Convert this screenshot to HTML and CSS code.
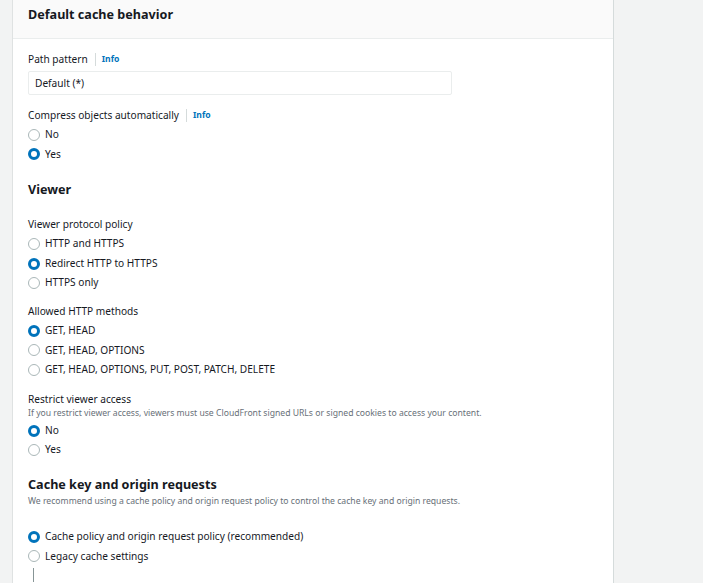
FILE: index.html
```html
<!DOCTYPE html>
<html>
<head>
<meta charset="utf-8">
<link rel="stylesheet" href="styles.css">
</head>
<body>
<div class="page">
  <div class="gutter"></div>
  <div class="panel">
    <div class="panel-header"><h2>Default cache behavior</h2></div>
    <div class="panel-body">
      <div class="field">
        <div class="label">Path pattern <span class="sep"></span><a class="info">Info</a></div>
        <div class="input">Default (*)</div>
      </div>
      <div class="field compress">
        <div class="label">Compress objects automatically <span class="sep"></span><a class="info">Info</a></div>
        <div class="radios">
          <div class="radio"><span class="dot"></span>No</div>
          <div class="radio"><span class="dot on"></span>Yes</div>
        </div>
      </div>

      <h3 class="section viewer">Viewer</h3>
      <div class="field">
        <div class="label">Viewer protocol policy</div>
        <div class="radios">
          <div class="radio"><span class="dot"></span>HTTP and HTTPS</div>
          <div class="radio"><span class="dot on"></span>Redirect HTTP to HTTPS</div>
          <div class="radio"><span class="dot"></span>HTTPS only</div>
        </div>
      </div>
      <div class="field methods">
        <div class="label">Allowed HTTP methods</div>
        <div class="radios">
          <div class="radio"><span class="dot on"></span>GET, HEAD</div>
          <div class="radio"><span class="dot"></span>GET, HEAD, OPTIONS</div>
          <div class="radio"><span class="dot"></span>GET, HEAD, OPTIONS, PUT, POST, PATCH, DELETE</div>
        </div>
      </div>
      <div class="field restrict">
        <div class="label">Restrict viewer access</div>
        <div class="desc tight">If you restrict viewer access, viewers must use CloudFront signed URLs or signed cookies to access your content.</div>
        <div class="radios">
          <div class="radio"><span class="dot on"></span>No</div>
          <div class="radio"><span class="dot"></span>Yes</div>
        </div>
      </div>

      <h3 class="section cachekey">Cache key and origin requests</h3>
      <div class="desc">We recommend using a cache policy and origin request policy to control the cache key and origin requests.</div>
      <div class="radios spaced">
        <div class="radio"><span class="dot on"></span>Cache policy and origin request policy (recommended)</div>
        <div class="radio"><span class="dot"></span>Legacy cache settings</div>
      </div>
      <div class="vline"></div>
    </div>
  </div>
  <div class="aside"></div>
</div>
</body>
</html>
```

FILE: styles.css
```css
* { box-sizing: border-box; }
html, body { margin: 0; padding: 0; height: 100%; }
body {
  font-family: "Noto Sans", "Open Sans", sans-serif;
  font-size: 10.15px;
  color: #16191f;
  background: #f2f3f3;
  overflow: hidden;
}
.page { display: flex; height: 583px; }
.gutter { width: 13px; flex: none; border-right: 1px solid #dfe2e2; background: #f2f3f3; }
.panel { width: 601px; flex: none; background: #fff; border-right: 1px solid #d5dbdb; }
.aside { flex: 1; background: #f2f3f3; }
.panel-header {
  height: 39px;
  background: #fafafa;
  border-bottom: 1px solid #eaeded;
  padding: 5px 15px 0;
}
.panel-header h2 { margin: 0; font-size: 12.6px; font-weight: 700; line-height: 20px; }
.panel-body { padding: 11px 15px 0; display: flex; flex-direction: column; }
.field { margin: 0; }
.field.compress { margin-top: 11px; }
.field.methods { margin-top: 9px; }
.field.restrict { margin-top: 10px; }
.label { display: flex; align-items: center; line-height: 18px; height: 18px; }
.sep { display: inline-block; width: 1px; height: 13px; background: #d5dbdb; margin: 0 6px 0 7px; }
.info { color: #0073bb; font-weight: 700; font-size: 8.6px; }
.input {
  width: 424px; height: 24px; margin-top: 3px;
  border: 1px solid #eaeded; border-radius: 2px;
  padding: 0 6px; line-height: 22px;
}
.radios { display: flex; flex-direction: column; margin-top: 1px; }
.radio { display: flex; align-items: center; height: 19.6px; line-height: 19.6px; }
.dot {
  width: 12px; height: 12px; border-radius: 50%;
  border: 1px solid #aab7b8; margin-right: 5px; flex: none;
}
.dot.on { border: 3.5px solid #0073bb; }
.section { margin: 0; font-size: 12.6px; font-weight: 700; line-height: 20px; }
.section.viewer { margin: 16px 0 15px; }
.section.cachekey { margin-top: 15px; }
.desc { font-size: 8.65px; color: #687078; line-height: 12px; }
.desc.tight { line-height: 11px; margin-top: 0; margin-bottom: 2px; }
.radios.spaced { margin-top: 20px; }
.vline { width: 1px; height: 14px; background: #879596; margin: 2px 0 0 5px; }
```
